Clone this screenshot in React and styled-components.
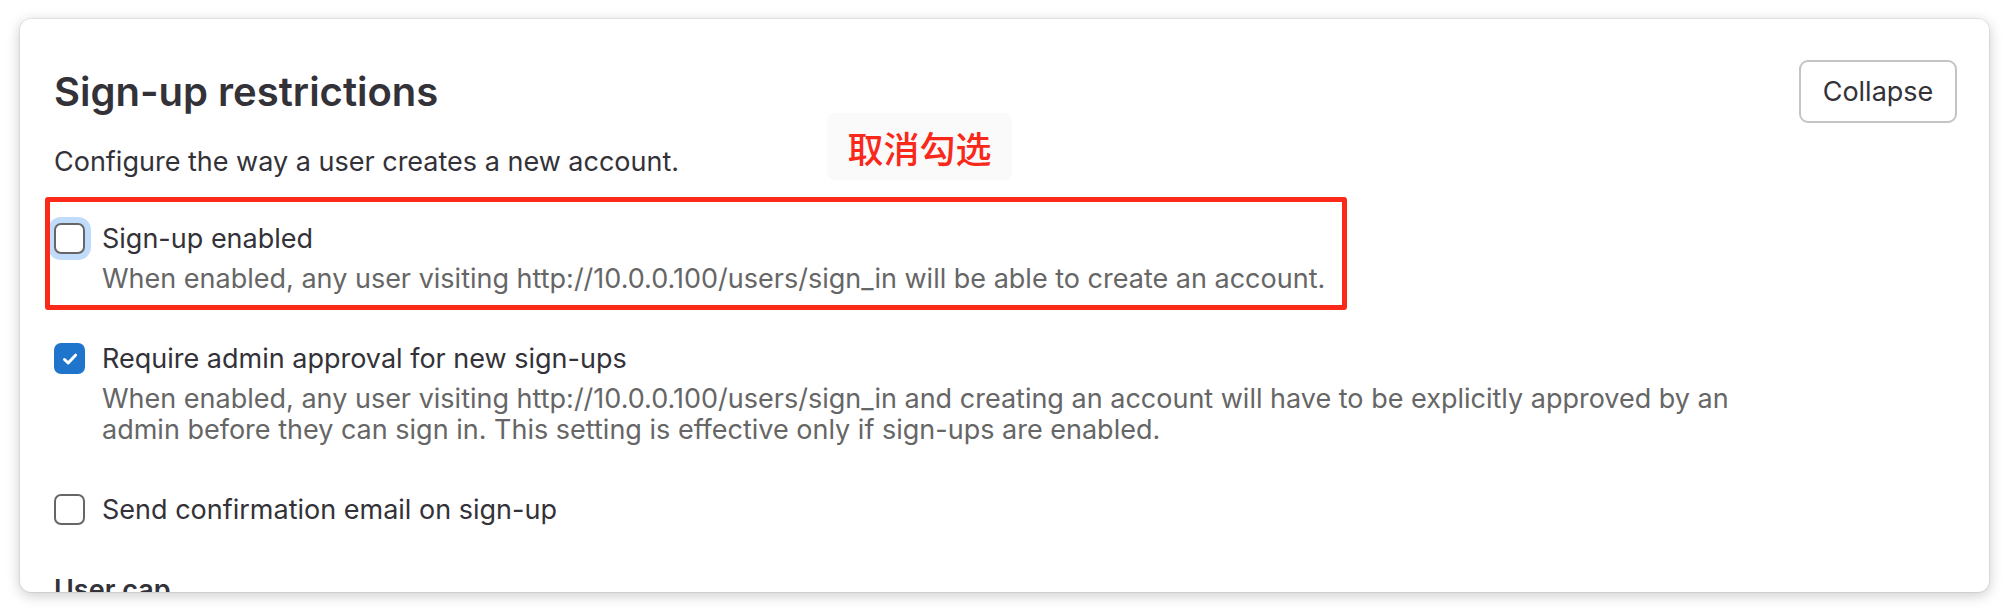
import styled, { createGlobalStyle } from "styled-components";

const GlobalStyles = createGlobalStyle`
  html, body {
    margin: 0;
    padding: 0;
    background: #ffffff;
  }
  body {
    font-family: Inter, "Noto Sans", "Liberation Sans", sans-serif;
    color: #333238;
  }
`;

const Page = styled.div`
  width: 2008px;
  height: 612px;
  box-sizing: border-box;
  padding: 19px 0 0 20px;
  overflow: hidden;
`;

const Card = styled.section`
  position: relative;
  width: 1969px;
  height: 573px;
  box-sizing: border-box;
  padding: 41px 32px 0 34px;
  background: #ffffff;
  border-radius: 11px;
  overflow: hidden;
  box-shadow: 0 0 0 1px rgba(0, 0, 0, 0.06), 0 3px 14px rgba(0, 0, 0, 0.22);
`;

const Header = styled.div`
  display: flex;
  justify-content: space-between;
  align-items: center;
`;

const Title = styled.h4`
  margin: 0;
  font-size: 40px;
  font-weight: 600;
  line-height: 48px;
  color: #333238;
`;

const CollapseButton = styled.button`
  width: 158px;
  height: 63px;
  border: 2px solid #c4c4c4;
  border-radius: 9px;
  background: #ffffff;
  font-family: Inter, "Liberation Sans", sans-serif;
  font-size: 27px;
  color: #333238;
  padding: 0;
`;

const Intro = styled.p`
  margin: 23px 0 0;
  font-size: 27px;
  line-height: 31px;
  color: #333238;
`;

const Form = styled.div`
  margin-top: 46px;
  display: flex;
  flex-direction: column;
`;

const Row = styled.div`
  display: flex;
  align-items: flex-start;
  gap: 17px;
  margin-bottom: 49px;
`;

const Box = styled.span`
  flex: none;
  width: 31px;
  height: 31px;
  box-sizing: border-box;
  border-radius: 7px;
  display: flex;
  align-items: center;
  justify-content: center;
  border: ${(p) => (p.$checked ? "none" : "2px solid #666666")};
  background: ${(p) => (p.$checked ? "#1f75cb" : "#ffffff")};
  box-shadow: ${(p) => (p.$focused ? "0 0 0 6px #c0dcfa" : "none")};
`;

const TextCol = styled.div`
  display: flex;
  flex-direction: column;
  gap: 9px;
`;

const Label = styled.span`
  font-size: 27px;
  line-height: 31px;
  color: #333238;
`;

const Help = styled.span`
  font-size: 27px;
  line-height: 31px;
  color: #666666;
  max-width: 1690px;
`;

const SubLabel = styled.div`
  font-size: 27px;
  line-height: 31px;
  font-weight: 600;
  color: #333238;
`;

const Highlight = styled.div`
  position: absolute;
  left: 25px;
  top: 178px;
  width: 1302px;
  height: 113px;
  box-sizing: border-box;
  border: 5px solid #fb2a18;
  border-radius: 3px;
  pointer-events: none;
`;

const Note = styled.div`
  position: absolute;
  left: 807px;
  top: 94px;
  width: 185px;
  height: 67px;
  border-radius: 8px;
  background: #fafafa;
  display: flex;
  align-items: center;
  justify-content: center;
  font-family: "Noto Sans CJK SC", "Noto Sans", sans-serif;
  font-size: 36px;
  font-weight: 500;
  color: #f8291b;
`;

function Checkbox({ checked, focused }) {
  return (
    <Box $checked={checked} $focused={focused}>
      {checked && (
        <svg width="16" height="16" viewBox="0 0 16 16">
          <path
            d="M2.5 8.5 L6.2 12 L13.5 4.2"
            fill="none"
            stroke="#ffffff"
            strokeWidth="3"
            strokeLinecap="round"
            strokeLinejoin="round"
          />
        </svg>
      )}
    </Box>
  );
}

function Option({ checked, focused, label, help }) {
  return (
    <Row>
      <Checkbox checked={checked} focused={focused} />
      <TextCol>
        <Label>{label}</Label>
        {help && <Help>{help}</Help>}
      </TextCol>
    </Row>
  );
}

export default function App() {
  return (
    <>
      <GlobalStyles />
      <Page>
        <Card>
          <Header>
            <Title>Sign-up restrictions</Title>
            <CollapseButton>Collapse</CollapseButton>
          </Header>
          <Intro>Configure the way a user creates a new account.</Intro>
          <Form>
            <Option
              focused
              label="Sign-up enabled"
              help="When enabled, any user visiting http://10.0.0.100/users/sign_in will be able to create an account."
            />
            <Option
              checked
              label="Require admin approval for new sign-ups"
              help="When enabled, any user visiting http://10.0.0.100/users/sign_in and creating an account will have to be explicitly approved by an admin before they can sign in. This setting is effective only if sign-ups are enabled."
            />
            <Option label="Send confirmation email on sign-up" />
            <SubLabel>User cap</SubLabel>
          </Form>
          <Highlight />
          <Note>取消勾选</Note>
        </Card>
      </Page>
    </>
  );
}
